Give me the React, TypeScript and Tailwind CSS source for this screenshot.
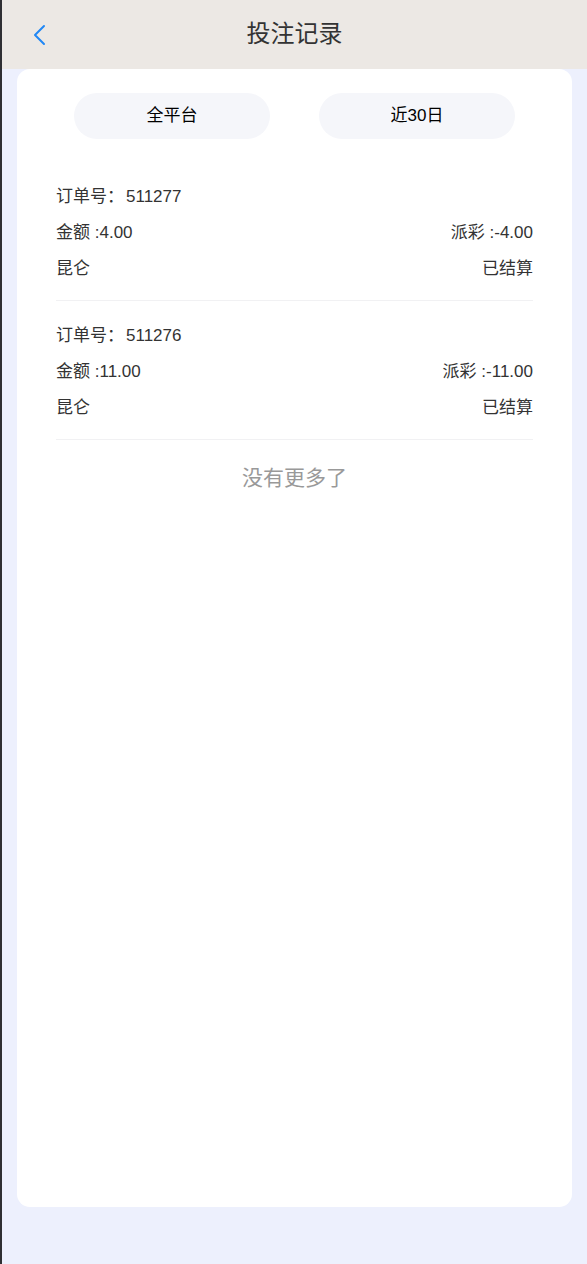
import React from "react";

const items = [
  { no: "511277", amount: "4.00", payout: "-4.00", platform: "昆仑", status: "已结算" },
  { no: "511276", amount: "11.00", payout: "-11.00", platform: "昆仑", status: "已结算" },
];

export default function App() {
  return (
    <div
      className="h-screen flex flex-col bg-[#edf0fd] border-l-2 border-[#2f2f33]"
      style={{ fontFamily: '"Liberation Sans", Arial, "Noto Sans CJK SC", sans-serif' }}
    >
      <div className="h-[69px] shrink-0 bg-[#ece8e4] relative flex items-center justify-center">
        <svg
          className="absolute left-[30px] top-[24px]"
          width="16"
          height="22"
          viewBox="0 0 16 22"
          fill="none"
        >
          <polyline
            points="12,2 3,11 12,20"
            stroke="#2188f5"
            strokeWidth="2"
            strokeLinecap="round"
            strokeLinejoin="round"
          />
        </svg>
        <div className="text-[24px] text-[#333] leading-none -mt-[1px]">投注记录</div>
      </div>
      <div className="flex-1 mx-[15px] mb-[57px] bg-white rounded-[13px] flex flex-col">
        <div className="flex justify-center gap-[49px] pt-[24px]">
          <div className="w-[196px] h-[46px] rounded-full bg-[#f5f6fa] flex items-center justify-center text-[17px] text-black">
            全平台
          </div>
          <div className="w-[196px] h-[46px] rounded-full bg-[#f5f6fa] flex items-center justify-center text-[17px] text-black">
            近30日
          </div>
        </div>
        <div className="px-[39px] mt-[23px]">
          {items.map((it) => (
            <div key={it.no} className="py-[15px] border-b border-[#f1f1f3] text-[17px] text-[#333]">
              <div className="h-[36px] pt-[4px] flex items-center">
                订单号：<span className="ml-[2px]">{it.no}</span>
              </div>
              <div className="h-[36px] pt-[4px] flex items-center justify-between">
                <span>金额 :{it.amount}</span>
                <span>派彩 :{it.payout}</span>
              </div>
              <div className="h-[36px] pt-[4px] flex items-center justify-between">
                <span>{it.platform}</span>
                <span>{it.status}</span>
              </div>
            </div>
          ))}
          <div className="h-[76px] flex items-center justify-center text-[21px] text-[#999]">
            没有更多了
          </div>
        </div>
      </div>
    </div>
  );
}
